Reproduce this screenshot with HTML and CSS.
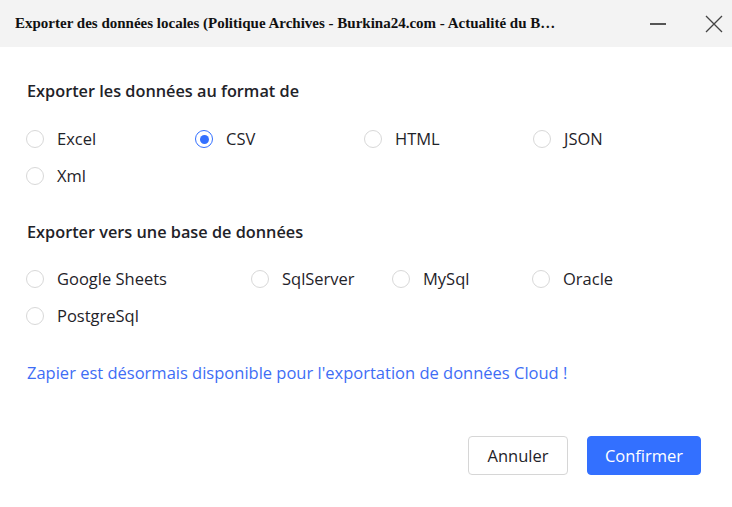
FILE: index.html
```html
<!DOCTYPE html>
<html lang="fr">
<head>
<meta charset="utf-8">
<title>Exporter</title>
<link rel="stylesheet" href="styles.css">
</head>
<body>
<div class="dialog">
  <div class="titlebar">
    <div class="title">Exporter des données locales (Politique Archives - Burkina24.com - Actualité du B…</div>
    <div class="controls">
      <span class="ctl minimize"><svg width="16" height="16" viewBox="0 0 16 16"><line x1="0" y1="8" x2="16" y2="8" stroke="#555" stroke-width="2"/></svg></span>
      <span class="ctl close"><svg width="18" height="18" viewBox="0 0 18 18"><path d="M1 1 L17 17 M17 1 L1 17" stroke="#444" stroke-width="1.3" fill="none"/></svg></span>
    </div>
  </div>
  <div class="content">
    <h2 class="heading">Exporter les données au format de</h2>
    <div class="group formats">
      <label class="option"><span class="radio"></span><span class="label">Excel</span></label>
      <label class="option"><span class="radio checked"></span><span class="label">CSV</span></label>
      <label class="option"><span class="radio"></span><span class="label">HTML</span></label>
      <label class="option"><span class="radio"></span><span class="label">JSON</span></label>
      <label class="option"><span class="radio"></span><span class="label">Xml</span></label>
    </div>
    <h2 class="heading second">Exporter vers une base de données</h2>
    <div class="group databases">
      <label class="option"><span class="radio"></span><span class="label">Google Sheets</span></label>
      <label class="option"><span class="radio"></span><span class="label">SqlServer</span></label>
      <label class="option"><span class="radio"></span><span class="label">MySql</span></label>
      <label class="option"><span class="radio"></span><span class="label">Oracle</span></label>
      <label class="option"><span class="radio"></span><span class="label">PostgreSql</span></label>
    </div>
    <p class="zapier">Zapier est désormais disponible pour l'exportation de données Cloud !</p>
    <div class="actions">
      <button class="btn cancel">Annuler</button>
      <button class="btn confirm">Confirmer</button>
    </div>
  </div>
</div>
</body>
</html>
```
FILE: styles.css
```css
* { box-sizing: border-box; }
html, body { margin: 0; padding: 0; background: #fff; }
body {
  font-family: "Open Sans", "Noto Sans", sans-serif;
  color: #1f2329;
  width: 732px;
  height: 507px;
  overflow: hidden;
}
.titlebar {
  height: 47px;
  background: #f3f3f3;
  display: flex;
  align-items: center;
  padding-left: 15px;
}
.title {
  flex: 1;
  font-family: "Liberation Serif", "Times New Roman", serif;
  font-weight: bold;
  font-size: 15px;
  color: #111;
  white-space: nowrap;
  overflow: hidden;
}
.controls {
  display: flex;
  align-items: center;
  padding-right: 9px;
}
.ctl { display: flex; align-items: center; justify-content: center; }
.minimize { width: 16px; height: 16px; margin-right: 39px; }
.close { width: 18px; height: 18px; }
.content {
  padding: 0 31px 0 26px;
}
.heading {
  margin: 0;
  font-size: 16.3px;
  font-weight: 600;
  line-height: 22px;
  padding-left: 1px;
  padding-top: 33px;
}
.heading.second { padding-top: 17px; }
.group {
  display: grid;
  grid-auto-rows: 37px;
  margin-top: 28px;
}
.formats { grid-template-columns: 169px 169px 169px 169px; }
.databases { grid-template-columns: 225px 141px 140px auto; margin-top: 27px; }
.option {
  display: flex;
  align-items: center;
  height: 18px;
  font-size: 16.5px;
}
.radio {
  width: 18px;
  height: 18px;
  border: 1px solid #d8d8d8;
  border-radius: 50%;
  flex: none;
  display: flex;
  align-items: center;
  justify-content: center;
  background: #fff;
}
.radio.checked { border-color: #3370ff; }
.radio.checked::after {
  content: "";
  width: 9px;
  height: 9px;
  border-radius: 50%;
  background: #3370ff;
}
.label { margin-left: 13px; line-height: 22px; }
.zapier {
  margin: 18px 0 0 1px;
  font-size: 16.5px;
  line-height: 22px;
  color: #3e6df5;
}
.actions {
  display: flex;
  justify-content: flex-end;
  gap: 19px;
  margin-top: 52px;
}
.btn {
  height: 39px;
  border-radius: 4px;
  font-family: inherit;
  font-size: 16.5px;
  cursor: pointer;
}
.cancel {
  width: 100px;
  background: #fff;
  border: 1px solid #d6d6d6;
  color: #1f2329;
}
.confirm {
  width: 114px;
  background: #3370ff;
  border: 1px solid #3370ff;
  color: #fff;
}
```
